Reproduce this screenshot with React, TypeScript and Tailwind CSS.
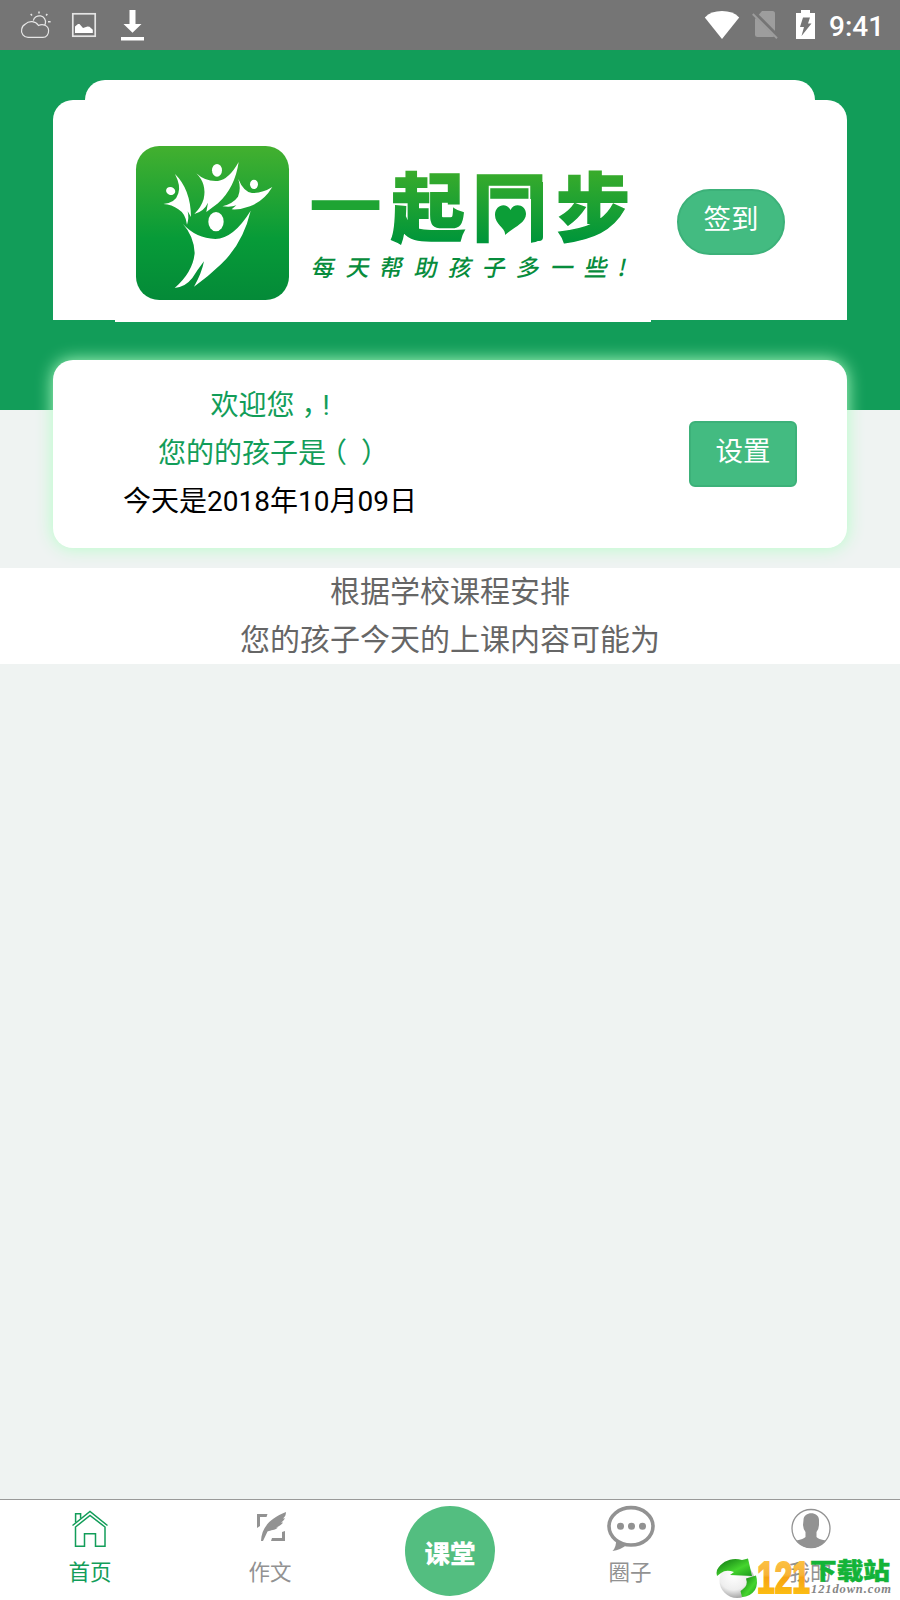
import type { ReactNode } from "react";

const cjk = "font-[Roboto,'Noto_Sans_CJK_SC',sans-serif]";

function StatusBar() {
  return (
    <header className="flex h-[50px] shrink-0 items-center bg-[#757575] pl-[20px] pr-[17px] text-white">
      <svg width="32" height="32" viewBox="20 9 32 32" fill="none" stroke="#e6e6e6" strokeWidth="1.2">
        <path d="M28.3 37.4a6.6 6.6 0 0 1-6.6-8.3c.4-2 1.4-4 3.6-5a8.5 8.5 0 0 1 13.2 1.4c4-2 9.8-.3 10.1 4.7c.3 4-2.2 7.2-5.7 7.2z" />
        <path d="M33.3 20.7a6.1 6.1 0 0 1 12.1 2.6l-.7 2" />
        <path d="M39 11.4v2M30.7 14l1.3 1.5M47.3 14l-1.2 1.5M48 21.7h2.6" strokeWidth="1.5" />
      </svg>
      <svg className="ml-[19px]" width="26" height="26" viewBox="71 12 26 26">
        <rect x="72.8" y="13.8" width="22.4" height="22.4" fill="none" stroke="#e4e4e4" strokeWidth="1.7" />
        <path d="M75 33v-6.5l3-2.5h1.5l3.5 4 4.5-1.5 2 .3 3.3 3V33z" fill="#fff" />
      </svg>
      <svg className="ml-[23px]" width="24" height="32" viewBox="120 9 24 32" fill="#fff">
        <path d="M129.5 10h6v14h6l-9 8.7-9-8.7h6zM121 37h23v3.5h-23z" />
      </svg>
      <div className="ml-auto flex items-center">
        <svg width="36" height="30" viewBox="704 10 36 30" fill="#fff">
          <path d="M704.8 17.4Q711 11 722 11t17.2 6.4L722 39z" />
        </svg>
        <svg className="ml-[12px]" width="28" height="30" viewBox="752 11 28 30">
          <path d="M755 20l7-8h10.5q2.5 0 2.5 2.5V35.500q0 2.500-2.500 2.500H757.500q-2.500 0-2.500-2.500z" fill="#9d9d9d" />
          <path d="M754.5 14.5L777 37" stroke="#757575" strokeWidth="4.5" />
          <path d="M752.8 15L777 39.2" stroke="#9d9d9d" strokeWidth="2" />
        </svg>
        <svg className="ml-[15px]" width="22" height="30" viewBox="795 10 22 30">
          <path d="M801 10h9v3h5v26h-19V13h5z" fill="#fff" />
          <path d="M803 17.500h7l-2 6h3.500L801.500 36l2.500-9h-4z" fill="#757575" />
        </svg>
        <span className="ml-[12px] w-[54px] whitespace-nowrap pt-[4px] text-right font-[Roboto,sans-serif] text-[28px] font-medium leading-[28px]">9:41</span>
      </div>
    </header>
  );
}

function Logo() {
  const name = "'Noto Sans CJK SC', sans-serif";
  const marks: [string, number][] = [
    ["每", 322], ["天", 357], ["帮", 390], ["助", 425], ["孩", 459],
    ["子", 493], ["多", 527], ["一", 561], ["些", 595], ["!", 621],
  ];
  return (
    <svg width="536" height="192" viewBox="115 130 536 192" className="block">
      <defs>
        <linearGradient id="tile" x1="0" y1="0" x2="0" y2="1">
          <stop offset="0" stopColor="#43b02f" />
          <stop offset=".6" stopColor="#079b38" />
          <stop offset="1" stopColor="#048a38" />
        </linearGradient>
        <linearGradient id="word" gradientUnits="userSpaceOnUse" x1="0" y1="172" x2="0" y2="241">
          <stop offset="0" stopColor="#38ab2b" />
          <stop offset="1" stopColor="#00963a" />
        </linearGradient>
      </defs>
      <rect x="115" y="130" width="536" height="192" fill="#fff" />
      <g transform="translate(110 130) scale(.33333)">
        <rect x="78" y="48" width="459" height="462" rx="70" fill="url(#tile)" />
        <g fill="#fff">
          <ellipse cx="182" cy="183" rx="14" ry="12" transform="rotate(20 182 183)" />
          <ellipse cx="321" cy="121" rx="15" ry="19" />
          <ellipse cx="432" cy="163" rx="12" ry="14" />
          <ellipse cx="318" cy="275" rx="23" ry="29" />
          <path d="M195 132Q242 178 243 261L233 244Q238 263 231 284Q227 251 205 238Q186 223 160 222Q197 219 205 190Q213 168 195 132z" />
          <path d="M259 130Q287 156 324 153Q357 148 386 96Q375 173 324 220L289 246L294 218Q282 244 253 252Q274 231 281 207Q291 162 259 130z" />
          <path d="M385 147Q401 186 426 189Q457 190 487 171Q462 213 420 229Q391 240 365 238L379 226Q363 233 337 229Q370 220 384 200Q394 178 385 147z" />
          <path d="M219 282Q258 325 316 327Q371 325 422 242Q399 340 333 403Q296 439 252 470Q275 430 282 394Q262 420 247 444Q225 472 194 474Q249 426 254 369Q252 319 219 282z" />
        </g>
      </g>
      <g fill="url(#word)" stroke="url(#word)" strokeWidth="1.5" fontFamily={name} fontWeight="900" fontSize="74" textAnchor="middle">
        <text x="428" y="235">起</text>
        <text x="509.5" y="235">同</text>
        <text x="593" y="235">步</text>
      </g>
      <text transform="translate(345.5 229) scale(.98 .82)" textAnchor="middle" fill="#1ea433" fontFamily={name} fontWeight="900" fontSize="74">一</text>
      <rect x="489" y="199" width="42" height="46" fill="#fff" />
      <path d="M531 182h12v55q0 4-4 4h-8z" fill="url(#word)" />
      <path d="M505 235c1-7-10-10-10-20 0-11 12-13 15.500-5 4-8 15.500-5 15.500 4 0 9-12 13-21 21z" fill="#0c9e37" />
      <g fill="#078c3c" fontFamily={name} fontWeight="500" fontSize="23" textAnchor="middle">
        {marks.map(([ch, x]) => (
          <text key={ch} transform={`translate(${x} 276) skewX(-12)`}>{ch}</text>
        ))}
      </g>
    </svg>
  );
}

function Tab({ icon, label, active }: { icon: ReactNode; label: string; active?: boolean }) {
  return (
    <div className={`flex w-[180px] flex-col items-center ${active ? "text-[#129d59]" : "text-[#929292]"}`}>
      <div className="flex h-[56px] items-center">{icon}</div>
      <span className="pt-px text-[21.5px] leading-[32px]">{label}</span>
    </div>
  );
}

function TabBar() {
  return (
    <nav className="mt-auto flex h-[101px] shrink-0 border-t border-[#999] bg-white">
      <Tab
        active
        label="首页"
        icon={
          <svg width="40" height="56" viewBox="70 1500 40 56" fill="none" stroke="currentColor" strokeWidth="1.5">
            <path d="M72.5 1525.500L90 1511.500l17.500 14M75.500 1527v19.300h9v-12.600h11v12.600h9.500V1527L90 1515.500z" />
            <path d="M75.6 1522.500v-8.800h5v4.800" />
          </svg>
        }
      />
      <Tab
        label="作文"
        icon={
          <svg width="40" height="56" viewBox="250 1500 40 56" fill="currentColor">
            <path d="M257 1514h10.500l-1 3H260v9l-3 2zM271 1541l1-3h10v-6l3-1v10z" />
            <path d="M261 1541c.5-12 7-22 25-29-.2 3-.7 4.500-3 6.500l2-.2c-1 2-2.500 3.200-4 4.200l2-.1c-2 3-5 4.300-7 5.100h2c-3.500 3-7 2.500-10.500 4l-4.500 9.500z" />
          </svg>
        }
      />
      <div className="flex w-[180px] justify-center pt-[6px]">
        <div className="flex size-[90px] items-center justify-center rounded-full bg-[#53be80] pt-[6px] text-[25.5px] font-black text-white">
          课堂
        </div>
      </div>
      <Tab
        label="圈子"
        icon={
          <svg width="50" height="56" viewBox="605 1500 50 56" fill="currentColor">
            <ellipse cx="631" cy="1526.3" rx="22" ry="18.7" fill="none" stroke="currentColor" strokeWidth="3.6" />
            <path d="M616 1540q.5 7-3.500 11 8-1 14-6z" />
            <circle cx="620.5" cy="1526.3" r="3.5" />
            <circle cx="631.5" cy="1526.3" r="3.5" />
            <circle cx="642.5" cy="1526.3" r="3.5" />
          </svg>
        }
      />
      <Tab
        label="我的"
        icon={
          <svg width="42" height="56" viewBox="789 1500 42 56" fill="currentColor">
            <circle cx="811" cy="1528.5" r="19" fill="none" stroke="currentColor" strokeWidth="1.3" />
            <path d="M803.5 1520c0-9 15.500-9 15.500 0v5q-.3 4.500-2.500 7v5q1.500 2 9 3.500-5.500 7.500-14.500 7.500t-14.500-7.500q7-1.500 9-3.500v-5q-2.200-2.500-2.500-7z" />
          </svg>
        }
      />
    </nav>
  );
}

function Watermark() {
  return (
    <svg className="absolute bottom-0 right-0" width="188" height="46" viewBox="712 1554 188 46">
      <defs>
        <radialGradient id="ball" cx=".4" cy=".35" r=".7">
          <stop offset="0" stopColor="#fff" />
          <stop offset=".6" stopColor="#eee" />
          <stop offset="1" stopColor="#999" />
        </radialGradient>
        <linearGradient id="leaf" x1="0" y1="0" x2="1" y2="1">
          <stop offset="0" stopColor="#0a6e10" />
          <stop offset=".6" stopColor="#45d52e" />
          <stop offset="1" stopColor="#1c9a1c" />
        </linearGradient>
        <linearGradient id="gold" x1="0" y1="0" x2="0" y2="1">
          <stop offset="0" stopColor="#ffc94a" />
          <stop offset=".45" stopColor="#f7b338" />
          <stop offset=".5" stopColor="#f6a313" />
          <stop offset="1" stopColor="#ffcb12" />
        </linearGradient>
      </defs>
      <circle cx="737" cy="1580.5" r="17.5" fill="url(#ball)" />
      <path d="M717 1570c5-9 15-13 25-10l6-1.500 4 17.500-22-1 4-3q-8-3-13 1l-4 3q-1-3 0-6z" fill="url(#leaf)" />
      <path d="M746 1578.500l10-3q2.500 8-1 14.500-5 7-13 7l-1.500-6 2-1.500q6-4 3.500-11z" fill="url(#leaf)" />
      <text x="757" y="1593" textLength="53" lengthAdjust="spacingAndGlyphs" fontFamily="'Liberation Sans', sans-serif" fontWeight="700" fontSize="45" fill="url(#gold)" stroke="url(#gold)" strokeWidth="2" strokeLinejoin="miter">121</text>
      <text x="810" y="1579" textLength="80" lengthAdjust="spacingAndGlyphs" fontFamily="'Noto Sans CJK SC', sans-serif" fontWeight="900" fontSize="23" fill="#13b338" stroke="#13b338" strokeWidth=".5">下载站</text>
      <text x="811" y="1593" textLength="80" lengthAdjust="spacing" fontFamily="'Liberation Serif', serif" fontStyle="italic" fontWeight="700" fontSize="12.5" fill="#858585">121down.com</text>
    </svg>
  );
}

const half = "inline-block w-[28px] text-center leading-none font-['Noto_Sans_CJK_SC'] [font-feature-settings:'halt']";

export default function App() {
  return (
    <div lang="zh-CN" className={`relative flex h-[1600px] w-[900px] flex-col overflow-hidden bg-[#eff3f2] ${cjk}`}>
      <StatusBar />
      <section className="h-[360px] shrink-0 bg-[#129d59] px-[53px] pt-[30px]">
        <div className="mx-[32px] h-[20px] rounded-t-[20px] bg-white" />
        <div className="flex h-[220px] rounded-t-[20px] bg-white pl-[62px]">
          <div className="mt-[30px] h-[192px] w-[536px] shrink-0">
            <Logo />
          </div>
          <button className="ml-[26px] mt-[89px] h-[66px] w-[108px] rounded-[33px] border-2 border-[#3cb179] bg-[#43bb81] pb-[4px] text-[27.5px] leading-none text-white">
            签到
          </button>
        </div>
      </section>
      <section className="relative mx-[53px] -mt-[50px] flex h-[188px] shrink-0 rounded-[20px] bg-white pt-[22px] shadow-[0_0_17px_#b3ffc6]">
        <div className="w-[434px] text-center text-[28px] leading-[48px] text-[#129d59]">
          <p className="h-[48px]">欢迎您<span className={half}>，</span>!</p>
          <p className="h-[48px]">您的的孩子是<span className={half}>（</span><span className={half}>）</span></p>
          <p className="h-[48px] text-black">今天是2018年10月09日</p>
        </div>
        <button className="ml-[202px] mt-[39px] h-[66px] w-[108px] rounded-[6px] border-2 border-[#3cb179] bg-[#43bb81] pb-[4px] text-[27.5px] leading-none text-white">
          设置
        </button>
      </section>
      <section className="mt-[20px] h-[96px] shrink-0 bg-white text-center text-[30px] leading-[48px] text-[#666]">
        <p>根据学校课程安排</p>
        <p>您的孩子今天的上课内容可能为</p>
      </section>
      <TabBar />
      <Watermark />
    </div>
  );
}
